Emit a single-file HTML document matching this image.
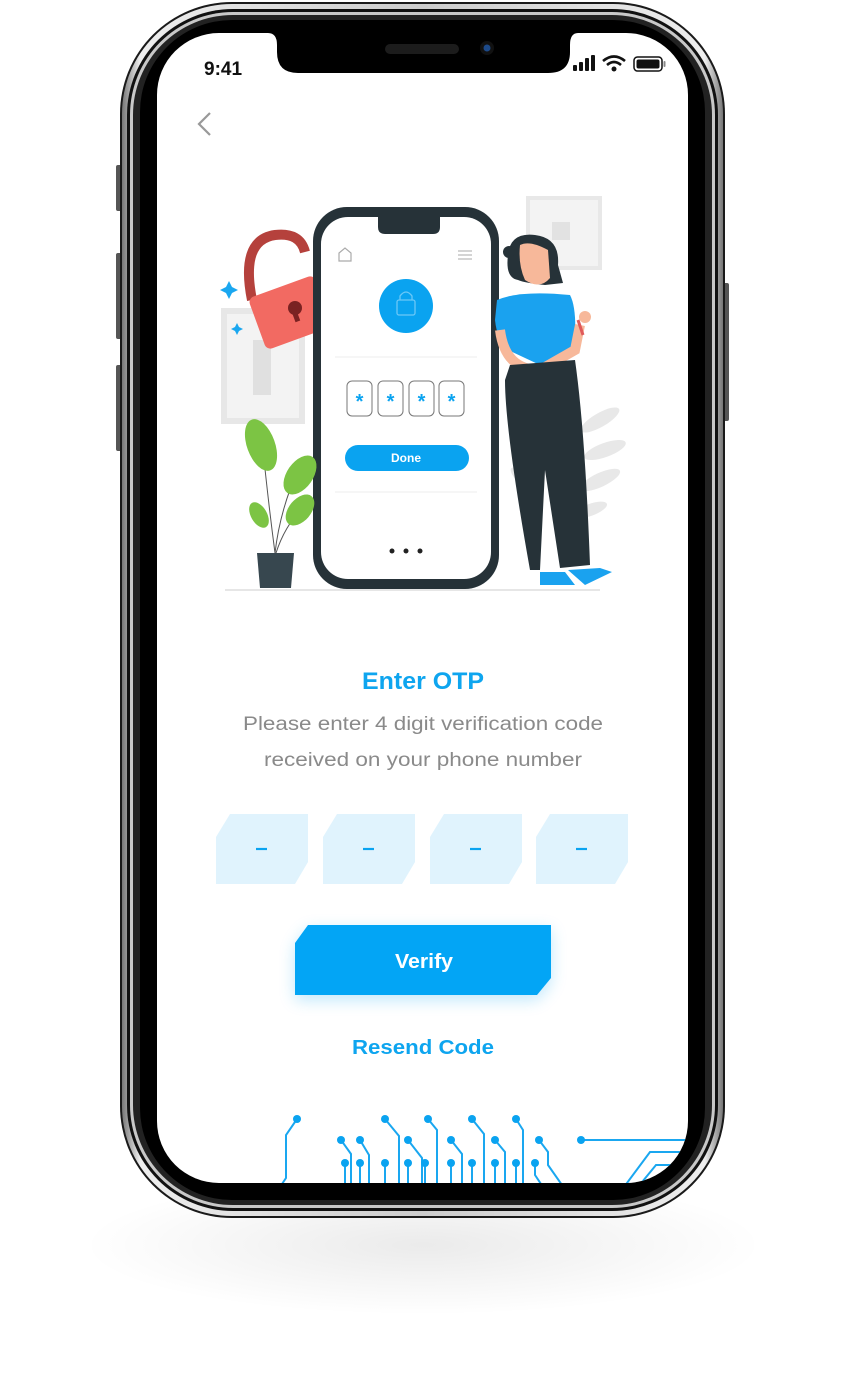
<!DOCTYPE html>
<html><head><meta charset="utf-8"><style>
html,body{margin:0;padding:0;background:#fff;width:845px;height:1382px;overflow:hidden}
svg{display:block}
text{font-family:"Liberation Sans",sans-serif}
</style></head><body>
<svg width="845" height="1382" viewBox="0 0 845 1382" xmlns="http://www.w3.org/2000/svg">
<defs>
<clipPath id="scr"><rect x="157" y="33" width="531" height="1150" rx="62"/></clipPath>
<radialGradient id="sh" cx="0.5" cy="0.5" r="0.5"><stop offset="0" stop-color="#000" stop-opacity="0.08"/><stop offset="1" stop-color="#000" stop-opacity="0"/></radialGradient>
<linearGradient id="silver" x1="0" y1="0" x2="1" y2="0"><stop offset="0" stop-color="#777"/><stop offset="0.03" stop-color="#eee"/><stop offset="0.5" stop-color="#ccc"/><stop offset="0.97" stop-color="#eee"/><stop offset="1" stop-color="#777"/></linearGradient>
<filter id="blur" x="-20%" y="-50%" width="140%" height="200%"><feGaussianBlur stdDeviation="8"/></filter>
</defs>
<ellipse cx="423" cy="1245" rx="340" ry="70" fill="url(#sh)"/>
<rect x="116" y="165" width="8" height="46" rx="2" fill="#555"/>
<rect x="116" y="253" width="8" height="86" rx="2" fill="#555"/>
<rect x="116" y="365" width="8" height="86" rx="2" fill="#555"/>
<rect x="721" y="283" width="8" height="138" rx="2" fill="#555"/>
<rect x="120" y="2" width="605" height="1216" rx="112" fill="#1a1a1a"/>
<rect x="122" y="4" width="601" height="1212" rx="110" fill="url(#silver)"/>
<rect x="127" y="9" width="591" height="1202" rx="106" fill="#111"/>
<rect x="130" y="12" width="585" height="1196" rx="103" fill="#c8c8c8"/>
<rect x="133" y="15" width="579" height="1190" rx="100" fill="#222"/>
<rect x="140" y="20" width="565" height="1180" rx="92" fill="#000"/>
<g clip-path="url(#scr)">
<rect x="157" y="33" width="531" height="1150" fill="#fff"/>
<g stroke="#1aa7f0" stroke-width="2" fill="none">
<path d="M297 1119 L286 1135 L286 1178 L278 1190"/>
<path d="M385 1119 L399 1136 L399 1190"/>
<path d="M428 1119 L437 1130 L437 1190"/>
<path d="M472 1119 L484 1134 L484 1190"/>
<path d="M516 1119 L523 1130 L523 1190"/>
<path d="M341 1140 L351 1154 L351 1190"/>
<path d="M360 1140 L369 1155 L369 1190"/>
<path d="M408 1140 L422 1158 L422 1190"/>
<path d="M451 1140 L462 1154 L462 1190"/>
<path d="M495 1140 L505 1152 L505 1190"/>
<path d="M539 1140 L548 1152 L548 1165 L562 1185"/>
<path d="M345 1163 V1190 M360 1163 V1190 M385 1163 V1190 M408 1163 V1190 M425 1163 V1190 M451 1163 V1190 M472 1163 V1190 M495 1163 V1190 M516 1163 V1190 M535 1163 L535 1175 L545 1190"/>
<path d="M581 1140 H690"/>
<path d="M624 1187 L650 1152 H690"/>
<path d="M638 1187 L656 1165 H690"/>
</g>
<g fill="#0aa3f0">
<circle cx="297" cy="1119" r="4"/><circle cx="385" cy="1119" r="4"/><circle cx="428" cy="1119" r="4"/><circle cx="472" cy="1119" r="4"/><circle cx="516" cy="1119" r="4"/>
<circle cx="341" cy="1140" r="4"/><circle cx="360" cy="1140" r="4"/><circle cx="408" cy="1140" r="4"/><circle cx="451" cy="1140" r="4"/><circle cx="495" cy="1140" r="4"/><circle cx="539" cy="1140" r="4"/><circle cx="581" cy="1140" r="4"/>
<circle cx="345" cy="1163" r="4"/><circle cx="360" cy="1163" r="4"/><circle cx="385" cy="1163" r="4"/><circle cx="408" cy="1163" r="4"/><circle cx="425" cy="1163" r="4"/><circle cx="451" cy="1163" r="4"/><circle cx="472" cy="1163" r="4"/><circle cx="495" cy="1163" r="4"/><circle cx="516" cy="1163" r="4"/><circle cx="535" cy="1163" r="4"/>
</g>
</g>
<path d="M268 33 H578 Q570 33 570 45 V52 Q570 73 548 73 H298 Q277 73 277 52 V45 Q277 33 268 33 Z" fill="#000"/>
<rect x="385" y="44" width="74" height="10" rx="5" fill="#1c1c1c"/>
<circle cx="487" cy="48" r="7" fill="#111"/><circle cx="487" cy="48" r="3.5" fill="#1d4a8a"/>
<text x="204" y="75" font-size="19" font-weight="bold" fill="#111">9:41</text>
<g fill="#111"><rect x="573" y="65" width="4" height="6" rx="1"/><rect x="579" y="62" width="4" height="9" rx="1"/><rect x="585" y="58" width="4" height="13" rx="1"/><rect x="591" y="55" width="4" height="16" rx="1"/></g>
<path d="M603 61 Q614 52 625 61 M607 65 Q614 59 621 65" stroke="#111" stroke-width="2.6" fill="none"/><circle cx="614" cy="69" r="2.5" fill="#111"/>
<rect x="634" y="57" width="28" height="14" rx="3.5" fill="none" stroke="#111" stroke-width="1.5"/><rect x="636.5" y="59.5" width="23" height="9" rx="2" fill="#111"/><rect x="663.5" y="61" width="2" height="6" rx="1" fill="#888"/>
<path d="M210 113 L199 124 L210 135" stroke="#999" stroke-width="2.2" fill="none"/>
<g>
<rect x="528" y="198" width="72" height="70" fill="#f3f3f3" stroke="#e8e8e8" stroke-width="4"/>
<rect x="552" y="222" width="18" height="18" fill="#e2e2e2"/>
<rect x="224" y="311" width="78" height="110" fill="#f3f3f3" stroke="#e7e7e7" stroke-width="6"/>
<rect x="253" y="340" width="18" height="55" fill="#e0e0e0"/>
<g fill="#e8e8e8"><ellipse cx="600" cy="420" rx="22" ry="7" transform="rotate(-30 600 420)"/><ellipse cx="605" cy="450" rx="22" ry="7" transform="rotate(-20 605 450)"/><ellipse cx="600" cy="480" rx="22" ry="7" transform="rotate(-25 600 480)"/><ellipse cx="560" cy="430" rx="18" ry="6" transform="rotate(60 560 430)"/><ellipse cx="525" cy="480" rx="18" ry="6" transform="rotate(40 525 480)"/><ellipse cx="590" cy="510" rx="18" ry="6" transform="rotate(-20 590 510)"/></g>
<path d="M252 300 Q240 240 275 235 Q300 232 305 252" stroke="#b5413c" stroke-width="10" fill="none"/>
<rect x="255" y="285" width="70" height="55" rx="6" fill="#f26a62" transform="rotate(-20 290 312)"/>
<circle cx="295" cy="308" r="7" fill="#7a2222"/><rect x="293" y="308" width="5" height="14" fill="#7a2222" transform="rotate(-20 295 315)"/>
<path d="M229 281 l3 6 6 3 -6 3 -3 6 -3 -6 -6 -3 6 -3z" fill="#1aa7f0"/><path d="M237 323 l2 4 4 2 -4 2 -2 4 -2 -4 -4 -2 4 -2z" fill="#1aa7f0"/>
<rect x="313" y="207" width="186" height="382" rx="34" fill="#263238"/>
<rect x="321" y="217" width="170" height="362" rx="27" fill="#fff"/>
<path d="M378 217 H440 V227 Q440 234 433 234 H385 Q378 234 378 227Z" fill="#263238"/>
<path d="M339 261 V253 L345 248 L351 253 V261Z" stroke="#aaa" stroke-width="1.2" fill="none"/>
<path d="M458 251 H472 M458 255 H472 M458 259 H472" stroke="#bbb" stroke-width="1.2"/>
<circle cx="406" cy="306" r="27" fill="#0aa3f0"/>
<rect x="397" y="300" width="18" height="15" rx="2" fill="none" stroke="#6cc8f7" stroke-width="1.3"/><path d="M400 300 V296 Q406 288 412 296 V300" stroke="#6cc8f7" stroke-width="1.3" fill="none"/>
<line x1="335" y1="357" x2="477" y2="357" stroke="#eee"/>
<g stroke="#777" stroke-width="1" fill="#fff"><rect x="347" y="381" width="25" height="35" rx="5"/><rect x="378" y="381" width="25" height="35" rx="5"/><rect x="409" y="381" width="25" height="35" rx="5"/><rect x="439" y="381" width="25" height="35" rx="5"/></g>
<g font-size="20" font-weight="bold" fill="#0aa3f0" text-anchor="middle"><text x="359.5" y="408">*</text><text x="390.5" y="408">*</text><text x="421.5" y="408">*</text><text x="451.5" y="408">*</text></g>
<rect x="345" y="445" width="124" height="26" rx="13" fill="#0aa3f0"/>
<text x="406" y="462" font-size="12" font-weight="bold" fill="#fff" text-anchor="middle">Done</text>
<line x1="335" y1="492" x2="477" y2="492" stroke="#eee"/>
<g fill="#222"><circle cx="392" cy="551" r="2.5"/><circle cx="406" cy="551" r="2.5"/><circle cx="420" cy="551" r="2.5"/></g>
<line x1="225" y1="590" x2="600" y2="590" stroke="#e6e6e6" stroke-width="2"/>
<path d="M275 553 Q268 500 262 440 M275 553 Q280 510 298 470 M276 553 Q285 525 305 505" stroke="#555" stroke-width="1" fill="none"/>
<g fill="#7cc444"><ellipse cx="261" cy="445" rx="14" ry="27" transform="rotate(-20 261 445)"/><ellipse cx="300" cy="475" rx="13" ry="22" transform="rotate(35 300 475)"/><ellipse cx="300" cy="510" rx="11" ry="18" transform="rotate(40 300 510)"/><ellipse cx="259" cy="515" rx="8" ry="14" transform="rotate(-30 259 515)"/></g>
<path d="M257 553 H294 L291 588 H260Z" fill="#37474f"/>
<g>
<path d="M508 255 Q510 232 535 235 Q560 238 558 265 L563 283 L545 285 Q525 283 518 280 Q505 278 508 255Z" fill="#263238"/>
<circle cx="509" cy="252" r="6" fill="#263238"/>
<path d="M520 245 Q530 240 548 250 L550 278 Q540 290 525 280 Q518 265 520 245Z" fill="#f7b89a"/>
<path d="M497 300 Q520 290 570 295 Q578 310 574 355 L540 365 L508 350 Q497 340 495 320Z" fill="#1aa2ef"/>
<path d="M500 330 Q505 370 540 370 L575 350 L580 325" stroke="#f7b89a" stroke-width="10" fill="none"/>
<circle cx="585" cy="317" r="6" fill="#f7b89a"/>
<path d="M578 320 L583 335" stroke="#e05a5a" stroke-width="3"/>
<path d="M510 365 L575 360 Q585 430 590 565 L560 568 L545 470 L540 570 L530 570 Q505 430 505 380Z" fill="#263238"/>
<path d="M540 572 H565 L575 585 H540Z M568 570 L600 568 L612 572 L585 585Z" fill="#1aa2ef"/>
</g>
</g>
<text x="362" y="689" font-size="24" font-weight="bold" fill="#0ea5ef" textLength="122" lengthAdjust="spacingAndGlyphs">Enter OTP</text>
<text x="243" y="730" font-size="19" fill="#8a8a8a" textLength="360" lengthAdjust="spacingAndGlyphs">Please enter 4 digit verification code</text>
<text x="264" y="766" font-size="19" fill="#8a8a8a" textLength="318" lengthAdjust="spacingAndGlyphs">received on your phone number</text>
<g fill="#e0f3fd">
<path d="M230 814 H308 V862 L295 884 H216 V837Z"/>
<path d="M337 814 H415 V862 L402 884 H323 V837Z"/>
<path d="M444 814 H522 V862 L509 884 H430 V837Z"/>
<path d="M550 814 H628 V862 L615 884 H536 V837Z"/>
</g>
<g stroke="#0aa3f0" stroke-width="2.2"><line x1="256" y1="849" x2="267" y2="849"/><line x1="363" y1="849" x2="374" y2="849"/><line x1="470" y1="849" x2="481" y2="849"/><line x1="576" y1="849" x2="587" y2="849"/></g>
<path d="M308 930 H551 V982 L537 1000 H295 V948Z" fill="#0aa3f0" opacity="0.25" filter="url(#blur)"/>
<path d="M308 925 H551 V978 L537 995 H295 V943Z" fill="#03a5f5"/>
<text x="395" y="968" font-size="20" font-weight="bold" fill="#fff" textLength="58" lengthAdjust="spacingAndGlyphs">Verify</text>
<text x="352" y="1054" font-size="20" font-weight="bold" fill="#0ea5ef" textLength="142" lengthAdjust="spacingAndGlyphs">Resend Code</text>
</svg>
</body></html>
